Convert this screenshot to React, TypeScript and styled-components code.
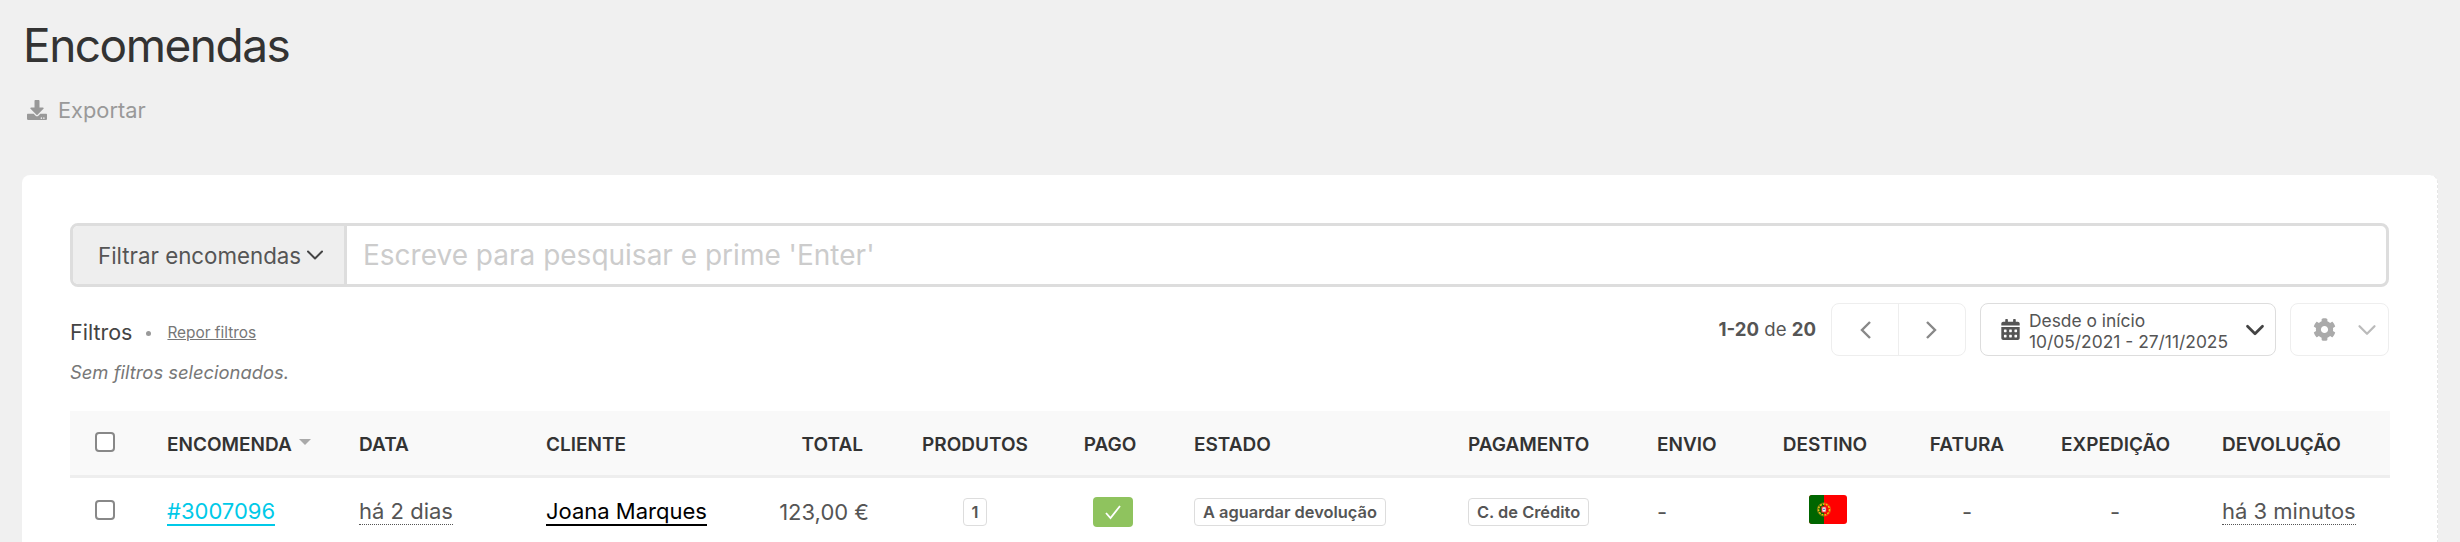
import React from 'react';
import styled, { createGlobalStyle } from 'styled-components';
import { ChevronDown } from 'lucide-react';
import { FaCalendarAlt, FaCog, FaDownload } from 'react-icons/fa';

const Global = createGlobalStyle`
  html, body { margin: 0; padding: 0; height: 542px; overflow: hidden; background: #f0f0f0; }
  body { font-family: Inter, "Liberation Sans", sans-serif; color: #555; }
  * { box-sizing: border-box; }
`;

const Page = styled.div`
  width: 2460px;
  height: 542px;
  overflow: hidden;
  padding: 0 22px;
`;
const Title = styled.h1`
  margin: 0;
  padding-top: 17px;
  padding-left: 1px;
  height: 92px;
  font-size: 46px;
  line-height: 56px;
  font-weight: 400;
  color: #333;
  letter-spacing: -1.5px;
`;
const ExportLink = styled.a`
  display: flex;
  align-items: center;
  gap: 11px;
  height: 36px;
  padding-left: 5px;
  font-size: 21.8px;
  color: #999;
`;
const Card = styled.main`
  margin-top: 47px;
  background: #fff;
  border-radius: 8px 8px 0 0;
  border-right: 1px dashed #e6e6e6;
  height: 400px;
  padding: 48px 48px 0 48px;
  width: 2416px;
`;
const SearchBar = styled.div`
  display: flex;
  height: 64px;
  border: 3px solid #ddd;
  border-radius: 8px;
  overflow: hidden;
`;
const FilterSelect = styled.div`
  width: 274px;
  display: flex;
  align-items: center;
  padding-left: 25px;
  background: #eee;
  border-right: 3px solid #ddd;
  font-size: 22.3px;
  color: #555;
`;
const SearchText = styled.div`
  flex: 1;
  display: flex;
  align-items: center;
  padding-left: 16px;
  font-size: 28px;
  color: #ccc;
`;
const Toolbar = styled.div`
  display: flex;
  justify-content: space-between;
  height: 124px;
`;
const FilterInfo = styled.div`
  padding-top: 31px;
`;
const FilterHead = styled.div`
  display: flex;
  align-items: center;
  height: 28px;
  color: #555;
`;
const FilterLabel = styled.span`
  font-size: 21.5px;
  color: #444;
`;
const Dot = styled.span`
  width: 5px;
  height: 5px;
  border-radius: 50%;
  background: #999;
  margin: 2px 16px 0 14px;
`;
const ResetLink = styled.a`
  font-size: 15.4px;
  color: #777;
  text-decoration: underline;
`;
const EmptyNote = styled.p`
  margin: 13px 0 0;
  font-size: 18.4px;
  line-height: 26px;
  font-style: italic;
  color: #777;
`;
const Controls = styled.div`
  display: flex;
  align-items: flex-start;
  padding-top: 16px;
`;
const PageCount = styled.div`
  font-size: 18.6px;
  line-height: 53px;
  margin-right: 15px;
  color: #555;
  b { font-weight: 700; }
`;
const NavGroup = styled.div`
  display: flex;
  height: 53px;
  width: 135px;
  border: 1px solid #eee;
  border-radius: 8px;
  margin-right: 14px;
`;
const NavButton = styled.div<{ $divider?: boolean }>`
  flex: 1;
  display: flex;
  align-items: center;
  justify-content: center;
  color: #888;
  ${(p) => (p.$divider ? 'border-right: 1px solid #eee;' : '')}
`;
const DateButton = styled.div`
  display: flex;
  align-items: center;
  width: 296px;
  height: 53px;
  border: 1px solid #ddd;
  border-radius: 8px;
  padding-left: 19px;
  margin-right: 14px;
  color: #555;
`;
const DateText = styled.div`
  flex: 1;
  padding: 2px 0 0 8px;
  font-size: 17.4px;
  line-height: 21px;
`;
const DateChevron = styled.span`
  display: flex;
  margin-right: 5px;
  color: #444;
`;
const SettingsButton = styled.div`
  display: flex;
  align-items: center;
  width: 99px;
  height: 53px;
  border: 1px solid #eee;
  border-radius: 8px;
  padding-left: 22px;
  gap: 16px;
  color: #aaa;
`;
const SettingsChevron = styled.span`
  display: flex;
  color: #bbb;
`;
const Table = styled.table`
  width: 2320px;
  table-layout: fixed;
  border-collapse: collapse;
`;
const HeadRow = styled.tr`
  height: 65px;
  background: #f9f9f9;
  border-bottom: 3px solid #eee;
`;
const BodyRow = styled.tr`
  height: 70px;
`;
type CellProps = { $align?: string; $pl?: number; $pr?: number };
const Th = styled.th<CellProps>`
  padding: 4px ${(p) => p.$pr ?? 0}px 0 ${(p) => p.$pl ?? 0}px;
  text-align: ${(p) => p.$align ?? 'left'};
  font-size: 19px;
  font-weight: 600;
  color: #333;
  white-space: nowrap;
`;
const Td = styled.td<CellProps>`
  padding: 0 ${(p) => p.$pr ?? 0}px 0 ${(p) => p.$pl ?? 0}px;
  text-align: ${(p) => p.$align ?? 'left'};
  font-size: 22px;
  color: #555;
  white-space: nowrap;
`;
const CheckBox = styled.span`
  display: inline-block;
  vertical-align: middle;
  width: 20px;
  height: 20px;
  margin: 0 0 6px 25px;
  border: 2px solid #888;
  border-radius: 4px;
  background: #fff;
`;
const SortArrow = styled.span`
  display: inline-block;
  width: 0;
  height: 0;
  margin-left: 7px;
  vertical-align: 6px;
  border: 6px solid transparent;
  border-top: 6px solid #aaa;
  border-bottom: 0;
`;
const OrderLink = styled.a`
  color: #00c9e8;
  border-bottom: 2px solid #00c9e8;
  line-height: 26px;
  display: inline-block;
`;
const CustomerLink = styled.a`
  color: #000;
  border-bottom: 2px solid #000;
  line-height: 26px;
  display: inline-block;
`;
const TimeText = styled.span`
  display: inline-block;
  line-height: 26px;
  border-bottom: 1px dotted #555;
`;
const Tag = styled.span`
  display: inline-flex;
  align-items: center;
  height: 28px;
  padding: 0 8px;
  border: 1px solid #ddd;
  border-radius: 4px;
  font-size: 16.4px;
  font-weight: 600;
  color: #555;
  vertical-align: middle;
`;
const PaidBadge = styled.span`
  display: inline-flex;
  align-items: center;
  justify-content: center;
  width: 40px;
  height: 30px;
  border-radius: 4px;
  background: #8fc35e;
  vertical-align: middle;
`;
const FlagSvg = styled.svg`
  display: inline-block;
  vertical-align: middle;
  border-radius: 3px;
  margin-bottom: 5px;
`;

const widths = [97, 192, 187, 220, 114, 190, 80, 318, 189, 125, 86, 193, 108, 221];

const Flag = () => (
  <FlagSvg width="38" height="29" viewBox="0 0 38 29">
    <rect width="38" height="29" fill="#ff0000" />
    <rect width="15" height="29" fill="#006600" />
    <circle cx="15" cy="14.5" r="5.5" fill="none" stroke="#e8c810" strokeWidth="1.6" strokeDasharray="2 1" />
    <circle cx="15" cy="14.5" r="6.6" fill="none" stroke="#d8801c" strokeWidth="0.6" />
    <rect x="12.2" y="11.2" width="5.6" height="6.6" rx="1" fill="#e02020" />
    <rect x="13.4" y="12.4" width="3.2" height="4.2" fill="#ffffff" />
    <circle cx="15" cy="14.4" r="0.8" fill="#3050b0" />
  </FlagSvg>
);

const Arrow = ({ d }: { d: string }) => (
  <svg width="16" height="22" viewBox="0 0 16 22" fill="none" stroke="currentColor" strokeWidth="2.4">
    <path d={d} />
  </svg>
);

export default function App() {
  return (
    <Page>
      <Global />
      <Title>Encomendas</Title>
      <ExportLink>
        <FaDownload size={20} />
        Exportar
      </ExportLink>
      <Card>
        <SearchBar>
          <FilterSelect>
            Filtrar encomendas
            <ChevronDown size={28} strokeWidth={1.7} color="#444" />
          </FilterSelect>
          <SearchText>Escreve para pesquisar e prime 'Enter'</SearchText>
        </SearchBar>
        <Toolbar>
          <FilterInfo>
            <FilterHead>
              <FilterLabel>Filtros</FilterLabel>
              <Dot />
              <ResetLink>Repor filtros</ResetLink>
            </FilterHead>
            <EmptyNote>Sem filtros selecionados.</EmptyNote>
          </FilterInfo>
          <Controls>
            <PageCount>
              <b>1-20</b> de <b>20</b>
            </PageCount>
            <NavGroup>
              <NavButton $divider>
                <Arrow d="M13 3L5 11l8 8" />
              </NavButton>
              <NavButton>
                <Arrow d="M3 3l8 8-8 8" />
              </NavButton>
            </NavGroup>
            <DateButton>
              <FaCalendarAlt size={21} />
              <DateText>
                Desde o início
                <br />
                10/05/2021 - 27/11/2025
              </DateText>
              <DateChevron>
                <ChevronDown size={30} strokeWidth={2.2} />
              </DateChevron>
            </DateButton>
            <SettingsButton>
              <FaCog size={23} />
              <SettingsChevron>
                <ChevronDown size={30} strokeWidth={1.8} />
              </SettingsChevron>
            </SettingsButton>
          </Controls>
        </Toolbar>
        <Table>
          <colgroup>
            {widths.map((w, i) => (
              <col key={i} style={{ width: w }} />
            ))}
          </colgroup>
          <thead>
            <HeadRow>
              <Th><CheckBox /></Th>
              <Th>ENCOMENDA<SortArrow /></Th>
              <Th>DATA</Th>
              <Th>CLIENTE</Th>
              <Th $align="right" $pr={17}>TOTAL</Th>
              <Th $align="center">PRODUTOS</Th>
              <Th $align="center">PAGO</Th>
              <Th $pl={44}>ESTADO</Th>
              <Th>PAGAMENTO</Th>
              <Th>ENVIO</Th>
              <Th $align="center">DESTINO</Th>
              <Th $align="center" $pl={5}>FATURA</Th>
              <Th $align="center">EXPEDIÇÃO</Th>
              <Th $pl={53}>DEVOLUÇÃO</Th>
            </HeadRow>
          </thead>
          <tbody>
            <BodyRow>
              <Td><CheckBox /></Td>
              <Td><OrderLink>#3007096</OrderLink></Td>
              <Td><TimeText>há 2 dias</TimeText></Td>
              <Td><CustomerLink>Joana Marques</CustomerLink></Td>
              <Td $align="right" $pr={11}>123,00 €</Td>
              <Td $align="center"><Tag>1</Tag></Td>
              <Td $align="center" $pl={6}><PaidBadge><svg width="20" height="18" viewBox="0 0 20 18" fill="none" stroke="#fff" strokeWidth="1.8"><path d="M3 10l4.5 5L17 3" /></svg></PaidBadge></Td>
              <Td $pl={44}><Tag>A aguardar devolução</Tag></Td>
              <Td><Tag>C. de Crédito</Tag></Td>
              <Td>-</Td>
              <Td $align="center" $pl={6}><Flag /></Td>
              <Td $align="center" $pl={5}>-</Td>
              <Td $align="center">-</Td>
              <Td $pl={53}><TimeText>há 3 minutos</TimeText></Td>
            </BodyRow>
          </tbody>
        </Table>
      </Card>
    </Page>
  );
}
